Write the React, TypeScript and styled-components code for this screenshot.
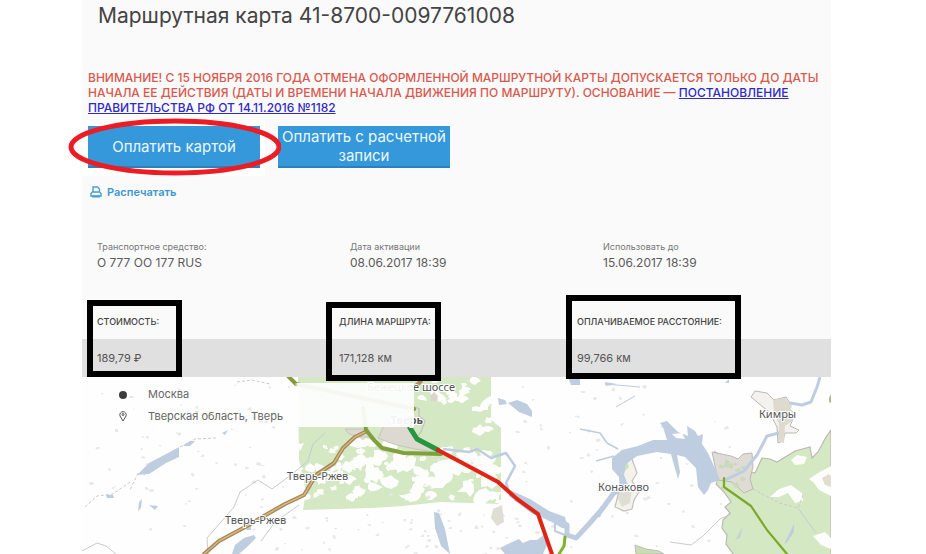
import React from "react";
import styled, { createGlobalStyle } from "styled-components";

const GlobalStyle = createGlobalStyle`
  * { box-sizing: border-box; }
  body { margin: 0; background: #fff; overflow: hidden; }
  body, button { font-family: Inter, "Open Sans", sans-serif; }
`;

const Page = styled.main`
  margin: 0 95px 0 82px;
  background: #fafafa;
  color: #4a4a4a;
`;

const Title = styled.h1`
  margin: 0;
  padding: 2px 16px 0;
  font-size: 21px;
  font-weight: 400;
  line-height: 28px;
  color: #444;
  white-space: nowrap;
`;

const Warning = styled.p`
  margin: 0;
  padding: 40px 0 0 6px;
  font-size: 12px;
  font-weight: 500;
  line-height: 15px;
  color: #d9594e;
  white-space: nowrap;
`;

const WarningLink = styled.a`
  color: #2f2bc4;
  text-decoration: underline;
`;

const Actions = styled.div`
  display: flex;
  gap: 12px;
  padding-top: 5px;
`;

const ActionSlot = styled.div<{ $highlighted?: boolean }>`
  position: relative;
  padding: 6px 5px 8px 6px;
  margin-left: ${(p) => (p.$highlighted ? "0" : "-5px")};
  background: ${(p) => (p.$highlighted ? "#fff" : "transparent")};
`;

const PayButton = styled.button`
  width: 172px;
  height: 42px;
  padding: 0;
  border: 0;
  border-bottom: 2px solid #2b80bd;
  background: #3498db;
  color: #eef7fd;
  font-size: 15px;
  line-height: 19px;
  cursor: pointer;
`;

const EllipseMark = styled.svg`
  position: absolute;
  z-index: 1;
  left: -14px;
  top: -3px;
  width: 213px;
  height: 60px;
  pointer-events: none;
`;

const PrintButton = styled.button`
  display: flex;
  align-items: center;
  gap: 5px;
  margin: 7px 0 0 8px;
  padding: 0;
  border: 0;
  background: none;
  color: #3f97cf;
  font-size: 11px;
  font-weight: 600;
  line-height: 18px;
  cursor: pointer;
`;

const Details = styled.dl`
  display: grid;
  grid-template-columns: 253px 253px 1fr;
  margin: 0;
  padding: 39px 0 0 15px;
`;

const DetailName = styled.dt`
  font-size: 9px;
  line-height: 14px;
  color: #777;
`;

const DetailValue = styled.dd`
  margin: 0;
  font-size: 12px;
  line-height: 18px;
  color: #5a5a5a;
`;

const Summary = styled.section`
  position: relative;
  padding-top: 31px;
`;

const Metrics = styled.table`
  width: 100%;
  table-layout: fixed;
  border-collapse: collapse;
  text-align: left;
  white-space: nowrap;
`;

const MetricHead = styled.th<{ $width?: number }>`
  width: ${(p) => (p.$width ? `${p.$width}px` : "auto")};
  height: 36px;
  padding: 0 0 0 15px;
  font-size: 9px;
  font-weight: 500;
  color: #444;
`;

const MetricValue = styled.td`
  height: 38px;
  padding: 0 0 0 15px;
  background: #e0e0e0;
  font-size: 11px;
  color: #555;
`;

const Frame = styled.div<{ $x: number; $y: number; $w: number; $h: number }>`
  position: absolute;
  z-index: 1;
  left: ${(p) => p.$x}px;
  top: ${(p) => p.$y}px;
  width: ${(p) => p.$w}px;
  height: ${(p) => p.$h}px;
  border: 6px solid #000;
  pointer-events: none;
`;

const MapArea = styled.section`
  position: relative;
  overflow: hidden;
  background: #fefefe;
`;

const MapDrawing = styled.svg`
  display: block;
  width: 100%;
  height: 177px;
  text {
    font-family: "Noto Sans", sans-serif;
    font-size: 11px;
    fill: #555;
    stroke: #fff;
    stroke-width: 2px;
    paint-order: stroke;
  }
`;

const RoutePoints = styled.ul`
  position: absolute;
  left: 0;
  top: 6px;
  width: 332px;
  margin: 0;
  padding: 0 0 0 36px;
  list-style: none;
  background: linear-gradient(90deg, transparent 64%, rgba(254, 254, 254, 0.93) 65%);
`;

const RoutePoint = styled.li`
  display: flex;
  align-items: center;
  gap: 20px;
  height: 22px;
  font-size: 11px;
  color: #666;
`;

const forest = [
  "M298 377 H491 V420 L501 428 V504 L440 502 403 506 371 508 303 510 306 491 299 460Z",
  "M713 484 L735 487 768 477 789 460 804 462 845 440 845 554 741 554 730 543 727 536 724 530 730 518 722 503Z",
  "M722 470 L716 484 724 492 731 502 725 507 730 513 723 520 722 528 727 535 726 544 734 555 H831 V430 L826 437 818 452 812 458 810 447 795 451 777 462 770 459 762 458 755 473 747 471 715 452Z",
  "M635 545 L646 549 659 551 664 554H636Z",
  "M619 461 L627 460 629 467 624 472 619 469Z",
];

function createRandom(seed: number) {
  let state = seed;
  return () => {
    state = (state * 1103515245 + 12345) % 2147483648;
    return state / 2147483648;
  };
}

function patch(x: number, y: number, size: number, random: () => number) {
  const points: string[] = [];
  for (let i = 0; i < 9; i += 1) {
    const angle = (i / 9) * Math.PI * 2;
    const radius = size * (0.5 + random() * 0.7);
    points.push(
      `${Math.round(x + Math.cos(angle) * radius * 1.3)} ${Math.round(y + Math.sin(angle) * radius)}`,
    );
  }
  return `M${points.join("L")}Z`;
}

function scatter(
  seed: number, count: number, x: number, y: number,
  w: number, h: number, min: number, max: number,
) {
  const random = createRandom(seed);
  return Array.from({ length: count }, () =>
    patch(x + random() * w, y + random() * h, min + random() * (max - min), random),
  ).join("");
}

const clearings = [
  scatter(11, 62, 345, 460, 156, 42, 2, 8),
  scatter(12, 22, 298, 440, 45, 62, 2, 5),
  scatter(14, 14, 345, 440, 50, 25, 3, 7),
  scatter(13, 18, 420, 380, 66, 22, 2, 6),
  scatter(15, 14, 440, 450, 58, 20, 2, 7),
  scatter(17, 7, 478, 400, 14, 40, 3, 6),
  scatter(16, 12, 375, 456, 110, 14, 3, 8),
].join("");
const hamlets = [
  scatter(21, 60, 88, 385, 210, 165, 1, 2),
  scatter(22, 45, 300, 510, 220, 44, 1, 2),
  scatter(23, 70, 505, 385, 240, 165, 1, 2),
].join("");
const tealSpots = scatter(31, 24, 300, 380, 200, 120, 1, 2);

function RouteMap() {
  return (
    <MapDrawing viewBox="82 377 749 177" preserveAspectRatio="xMinYMin slice" role="img" aria-label="Карта маршрута">
      <rect x="82" y="377" width="1600" height="177" fill="#fefefe" />
      <path d={hamlets} fill="#e9e9e5" />
      <path d={forest[0]} fill="#d3e8c3" />
      <path d={clearings} fill="#fdfdfb" />
      <path d={tealSpots} fill="#dfe9e3" />
      <path d="M345 429L362 429 374 437 361 437 349 434Z M385 424L412 424 419 442 430 446 443 454 428 451 415 449 397 445 388 442 378 438Z" fill="#dcd9d1" stroke="#c8c4bd" />
      <path d="M411 405L419 409 419 416 425 421 421 432 417 437" fill="none" stroke="#cac6c0" strokeWidth="1.5" />
      <path d="M430 396L434 392 438 396 437 401 431 401Z" fill="#d9d5cd" />
      <path d={forest[2]} fill="#d3e8c3" stroke="#bdb9b2" strokeWidth="1.2" />
      <path d={forest[3]} fill="#c8dfb4" stroke="#c1bdb5" />
      <path d="M831 394L829 398 829 402 831 403Z" fill="#a8bd98" />
      <path d="M809 479L818 473 831 466V496L819 490 814 483Z M770 497L779 489 791 485 802 493 803 501 795 503 788 493 779 497Z M791 460L797 455 807 457 804 464 795 465Z M813 536L825 532 831 538V549L821 545Z" fill="#fdfdfb" />
      <path d="M822 478L829 474 831 476 831 487 825 485Z" fill="#e3ddd0" />
      <path d="M712 452L731 456 738 459 743 454 752 453 753 467 750 479 753 489 744 493 732 482 718 480Z" fill="#dedcd4" stroke="#bdb9b2" />
      <path d={scatter(41, 12, 720, 460, 28, 28, 1, 3)} fill="#c9d9bd" />
      <path d="M751 397L755 391 767 393 774 400 786 397 790 403 787 407 795 414 790 426 799 430 796 433 785 433 783 441 778 443 777 427 769 412Z" fill="#f3f2ee" stroke="#bcb8b1" />
      <path d="M773 400L785 398 792 406 789 413 793 420 785 426 784 443 778 441 779 424 774 412Z" fill="#dcdbcd" />
      <path d="M619 461L632 459 637 473 632 481 639 492 634 500 632 509 624 511 615 507 619 491 622 480 616 468Z" fill="#f3f2ed" stroke="#c4c0b9" strokeWidth="1.2" />
      <path d={forest[4]} fill="#cfe3bb" />
      <path d="M620 489L632 487 630 503 622 507 618 499Z M493 509L502 505 504 522 497 526 491 518Z" fill="#dfded4" />

      <g fill="none" stroke="#c8cbd0" strokeWidth="1">
        <path d="M130 482L113 494 97 496 84 508M138 473L130 490M180 447L195 439 217 438M237 382L252 380 270 384" strokeDasharray="3 2" />
        <path d="M82 551L97 543 106 546 116 554M208 554L207 538 221 522 234 507 240 492 258 480 272 489 291 475 308 461 313 444 325 433M261 541L275 522 299 505M670 542L691 545 703 536 720 519 731 514M798 508L816 533" />
        <path d="M753 489L779 503 798 508 803 495" strokeDasharray="3 2" />
      </g>
      <g fill="none" stroke="#bfcde0" strokeLinejoin="round">
        <path d="M443 449L469 452 477 449 491 458 506 453 515 466 506 483 510 494" strokeWidth="2.5" />
        <path d="M580 429L600 433 607 443 618 449M596 461L614 456" strokeWidth="1.6" />
        <path d="M635 396L616 407M605 384L640 387" strokeWidth="1" />
        <path d="M790 403L802 405 811 402 817 387 820 377" strokeWidth="3" />
        <path d="M725 480L744 471 757 455 767 436 779 433" strokeWidth="3" />
        <path d="M510 494L534 509 553 517 567 525 567 535 576 538 589 524 603 508 613 494 624 486" strokeWidth="5" />
        <path d="M555 519L555 531 565 535M603 508L599 517" strokeWidth="2" />
      </g>
      <g fill="#bfcde0">
        <path d="M137 475L149 463 168 453 179 447 179 457 166 463 149 474Z M183 446L190 441 195 441 190 446Z M222 433L228 430 225 435Z M106 495L113 495 114 498 107 498Z M139 502L142 499 141 508 138 511Z M149 505L158 506 155 510Z M232 554L235 545 244 538 254 535 256 538 247 547 239 554Z M434 512L439 513 445 529 450 554 441 546 435 528Z" />
        <path d="M498 398L505 400 507 404 499 405Z M508 403L517 400 527 404 532 411 532 417 519 412Z M568 377H580V385H571Z M605 382L617 384 606 386Z M725 383L729 379 729 383Z" />
        <path d="M612 458L622 450 638 446 653 440 667 440 663 427 660 423 667 421 672 426 678 432 688 436 687 426 695 431 698 436 703 434 702 444 708 453 713 464 720 480 711 483 708 490 704 495 698 487 696 468 685 457 677 455 680 472 678 479 674 465 671 454 657 452 637 456 626 464 624 475 629 487 620 492 619 477 612 469Z" />
        <path d="M510 490L530 499 549 511 565 517 568 529 562 528 550 521 531 513 514 500Z M500 548L508 544 519 539 523 543 530 540 537 540 544 535 548 543 543 554H505Z M247 525h4v5h-5zM790 532L794 524 794 532 787 542 784 544Z" />
      </g>
      <path d="M672 434L682 433 685 439 676 438Z" fill="#fefefe" />
      <path d="M735 540L742 528 743 526 740 538Z" fill="#c8d2d3" />

      <g fill="none" strokeLinejoin="round" strokeLinecap="round">
        <path d="M204 554L219 541 247 526 264 516 285 504 304 495 316 475 334 463 343 448 355 437 367 431" stroke="#a28358" strokeWidth="4" />
        <path d="M204 554L219 541 247 526 264 516 285 504 304 495 316 475 334 463 343 448 355 437 367 431" stroke="#d6b878" strokeWidth="1.5" />
        <path d="M363 408L366 430L374 440 382 448 404 453 441 454" stroke="#829f3e" strokeWidth="4" />
        <path d="M287 375L296 384L414 409" stroke="#849b38" strokeWidth="4" />
        <path d="M416 386L421 381" stroke="#b38b5c" strokeWidth="4" />
        <path d="M410 428L417 439 438 450" stroke="#28963f" strokeWidth="5" />
        <path d="M438 450L498 482 517 499 538 514 553 557" stroke="#df2517" strokeWidth="4" strokeLinejoin="miter" />
        <path d="M724 478L724 487 751 506 767 530 787 554" stroke="#7da829" strokeWidth="2.2" />
        <path d="M565 537L564 546 559 554" stroke="#79b52b" strokeWidth="3" />
      </g>
      <text x="455" y="391" textAnchor="end">Бежецкое шоссе</text>
      <text x="423" y="424" textAnchor="end" fontWeight="700">Тверь</text>
      <text x="287" y="480">Тверь-Ржев</text>
      <text x="225" y="524">Тверь-Ржев</text>
      <text x="598" y="491">Конаково</text>
      <text x="759" y="418">Кимры</text>
    </MapDrawing>
  );
}

export default function App() {
  return (
    <>
      <GlobalStyle />
      <Page>
        <Title>Маршрутная карта 41-8700-0097761008</Title>
        <Warning>
          ВНИМАНИЕ! С 15 НОЯБРЯ 2016 ГОДА ОТМЕНА ОФОРМЛЕННОЙ МАРШРУТНОЙ КАРТЫ ДОПУСКАЕТСЯ ТОЛЬКО ДО ДАТЫ
          <br />
          НАЧАЛА ЕЕ ДЕЙСТВИЯ (ДАТЫ И ВРЕМЕНИ НАЧАЛА ДВИЖЕНИЯ ПО МАРШРУТУ). ОСНОВАНИЕ —{" "}
          <WarningLink href="#decree">
            ПОСТАНОВЛЕНИЕ
            <br />
            ПРАВИТЕЛЬСТВА РФ ОТ 14.11.2016 №1182
          </WarningLink>
        </Warning>
        <Actions>
          <ActionSlot $highlighted>
            <PayButton>Оплатить картой</PayButton>
            <EllipseMark viewBox="0 0 213 60" aria-hidden="true">
              <ellipse cx="107" cy="30" rx="104" ry="26" fill="none" stroke="#ed1c24" strokeWidth="5" />
            </EllipseMark>
          </ActionSlot>
          <ActionSlot>
            <PayButton>Оплатить с расчетной записи</PayButton>
          </ActionSlot>
        </Actions>
        <PrintButton>
          <svg width="12" height="12" viewBox="0 0 12 12" fill="none" stroke="#4a9fd3" strokeWidth="1.4" aria-hidden="true">
            <path d="M3 6V1H7.500L9.500 3V6M2.500 6H9.500L11 7.500V10H1V7.500Z" />
            <path d="M2 10.500H10" strokeWidth="2" />
          </svg>
          Распечатать
        </PrintButton>
        <Details>
          <div>
            <DetailName>Транспортное средство:</DetailName>
            <DetailValue>О 777 ОО 177 RUS</DetailValue>
          </div>
          <div>
            <DetailName>Дата активации</DetailName>
            <DetailValue>08.06.2017 18:39</DetailValue>
          </div>
          <div>
            <DetailName>Использовать до</DetailName>
            <DetailValue>15.06.2017 18:39</DetailValue>
          </div>
        </Details>
        <Summary>
          <Metrics>
            <thead>
              <tr>
                <MetricHead $width={242}>СТОИМОСТЬ:</MetricHead>
                <MetricHead $width={238}>ДЛИНА МАРШРУТА:</MetricHead>
                <MetricHead>ОПЛАЧИВАЕМОЕ РАССТОЯНИЕ:</MetricHead>
              </tr>
            </thead>
            <tbody>
              <tr>
                <MetricValue>189,79 ₽</MetricValue>
                <MetricValue>171,128 км</MetricValue>
                <MetricValue>99,766 км</MetricValue>
              </tr>
            </tbody>
          </Metrics>
          <Frame $x={5} $y={28} $w={95} $h={77} />
          <Frame $x={244} $y={30} $w={115} $h={79} />
          <Frame $x={484} $y={23} $w={175} $h={84} />
        </Summary>
        <MapArea>
          <RouteMap />
          <RoutePoints>
            <RoutePoint>
              <svg width="10" height="12" viewBox="0 0 10 12" aria-hidden="true">
                <circle cx="5" cy="7" r="4" fill="#3c3c3c" />
              </svg>
              Москва
            </RoutePoint>
            <RoutePoint>
              <svg width="10" height="12" viewBox="0 0 10 12" fill="none" stroke="#555" aria-hidden="true">
                <path d="M5 11L2 6A3.200 3.200 0 1 1 8 6Z" />
                <circle cx="5" cy="4.500" r="1" />
              </svg>
              Тверская область, Тверь
            </RoutePoint>
          </RoutePoints>
        </MapArea>
      </Page>
    </>
  );
}
